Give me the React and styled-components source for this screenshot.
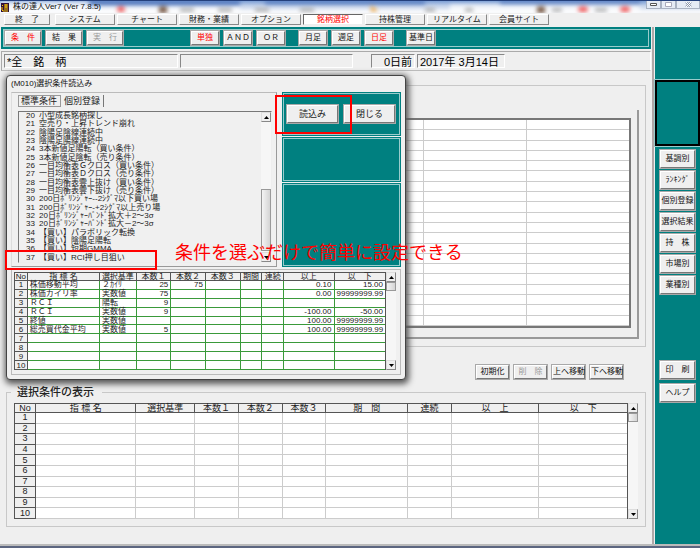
import styled, { createGlobalStyle, css } from "styled-components";

const GlobalStyle = createGlobalStyle`
  * {
    box-sizing: border-box;
  }
  body {
    margin: 0;
    background: #efefef;
    color: #222;
    font: 8px/8px "Liberation Sans", "Noto Sans CJK JP", sans-serif;
  }
  button, input {
    font: inherit;
    color: inherit;
    white-space: nowrap;
  }
`;

const raised = css`
  border: 1px solid;
  border-color: #fff #777 #777 #fff;
  box-shadow: 0 0 0 1px #a9a9a9;
`;

const Page = styled.div`
  display: flex;
  flex-direction: column;
  min-height: 100vh;
  border-bottom: 2px solid #5c6680;
`;

const TitleBar = styled.header`
  position: relative;
  display: flex;
  align-items: center;
  gap: 4px;
  height: 13px;
  padding-left: 1px;
  overflow: hidden;
  border-top: 1px solid #24407c;
  background: linear-gradient(#7d9fd6, #c3d2ea 40%, #f4f6fa 85%);
`;

const Backdrop = styled.svg`
  position: absolute;
  inset: 0;
  width: 100%;
  height: 100%;
  filter: blur(2px);
`;

const Title = styled.h1`
  position: relative;
  flex: 1;
  margin: 0;
  font-size: 8px;
  font-weight: 400;
  color: #111;
`;

const AppIcon = styled.svg`
  position: relative;
  width: 8px;
  height: 9px;
`;

const WindowButtons = styled.div`
  position: relative;
  align-self: flex-start;
  display: flex;
  height: 8px;
`;

const WindowButton = styled.button`
  display: grid;
  place-items: center;
  width: ${(p) => (p.$wide ? 24 : 15)}px;
  padding: 0;
  border: 1px solid #a9b2c2;
  border-top: 0;
  background: #e5ebf5;
`;

const Menu = styled.nav`
  display: flex;
  gap: 2px;
  height: 14px;
  padding: 1px 4px 2px;
`;

const MenuButton = styled.button`
  width: 60px;
  padding: 0;
  border: 1px solid;
  border-color: ${(p) => (p.$active ? "#666 #eee #eee #666" : "#fff #888 #888 #fff")};
  background: ${(p) => (p.$active ? "#fff" : "#efefef")};
  color: ${(p) => (p.$active ? "#f00" : "#222")};

  &:first-child {
    width: 46px;
    margin-right: 3px;
  }
`;

const Main = styled.div`
  flex: 1;
  display: flex;
  border-bottom: 2px solid #bbb;
`;

const Content = styled.main`
  flex: 1;
  min-width: 0;
  border-right: 2px solid #b0a8a8;
`;

const Toolbar = styled.div`
  display: flex;
  gap: 14px;
  height: 22px;
  margin: 0 1px;
  padding: 3px 3px;
  border: 1px solid #008080;
  outline: 1px solid #9cc;
  outline-offset: -3px;
  background: #008080;
`;

const ToolGroup = styled.div`
  display: flex;
  gap: 5px;
  margin-right: ${(p) => (p.$spaced ? 54 : 0)}px;
`;

const ToolButton = styled.button`
  ${raised}
  width: ${(p) => (p.$wide ? 36 : 28)}px;
  height: 14px;
  padding: 0;
  background: #efefef;
  color: ${(p) => (p.$on ? "#f00" : "#111")};

  &:disabled {
    color: #999;
  }
`;

const StatusBar = styled.div`
  display: flex;
  align-items: center;
  gap: 2px;
  height: 20px;
  margin: 2px 1px 0;
  padding: 0 2px;
  border: 1px solid;
  border-color: #aaa #fff #bbb #aaa;
`;

const StatusField = styled.input`
  width: ${(p) => p.$width}px;
  height: 14px;
  margin-right: ${(p) => (p.$last ? 16 : 0)}px;
  padding: 0 2px;
  border: 1px solid;
  border-color: #888 #fff #fff #888;
  background: #efefef;
  font-size: 11px;
  color: #000;
  text-align: ${(p) => p.$align || "left"};
`;

const Body = styled.div`
  position: relative;
  padding: 14px 6px 16px;
`;

const Group = styled.section`
  padding: ${(p) => (p.$deep ? "24px 6px 7px 4px" : "10px 7px 7px")};
  border: 1px solid #c8c8c8;
`;

const GroupTitle = styled.h2`
  width: fit-content;
  margin: -16px 0 5px -3px;
  padding: 0 8px 0 6px;
  background: #efefef;
  font-size: 11px;
  line-height: 11px;
  font-weight: 500;
`;

const Sheet = styled.div`
  padding: 8px 6px 9px 2px;
  border: solid #999;
  border-width: 0 2px 2px 0;
`;

const TableFrame = styled.div`
  display: flex;
`;

const Table = styled.table`
  flex: 1;
  width: 100%;
  min-width: 0;
  height: ${(p) => p.$height}px;
  table-layout: fixed;
  border-collapse: separate;
  border-spacing: 0;
  border: solid ${(p) => (p.$thick ? "#777" : "#555")};
  border-width: ${(p) => (p.$thick ? "2px" : "1px 1px 0 1px")};
  background: #fff;
  font-size: ${(p) => p.$font || 8}px;

  th, td {
    height: 8px;
    padding: 0 2px;
    font-weight: 400;
    line-height: 7px;
    white-space: nowrap;
    border: 0 solid ${(p) => p.$line};
    border-width: 0 1px 1px 0;
  }
  th {
    padding: 0;
    border-color: #555;
    background: #efefef;
  }
  thead th {
    height: ${(p) => p.$head || 8}px;
  }
  tr > :last-child {
    border-right: 0;
  }
`;

const Cell = styled.td`
  text-align: ${(p) => (p.$number ? "right" : "left")};
`;

const ScrollTrack = styled.div`
  display: flex;
  flex-direction: column;
  width: 10px;
  background: #f6f6f6;
`;

const ScrollArrow = styled.button`
  display: grid;
  place-items: center;
  height: 10px;
  padding: 0;
  border: 1px solid;
  border-color: #ddd #888 #888 #ddd;
  background: #efefef;
`;

const ScrollThumb = styled.div`
  height: ${(p) => p.$size}px;
  margin-top: ${(p) => p.$offset || 0}px;
  border: 1px solid #999;
  background: linear-gradient(90deg, #f4f4f4, #d4d4d4);
`;

const ScrollGap = styled.div`
  flex: 1;
`;

const Actions = styled.div`
  display: flex;
  justify-content: flex-end;
  gap: 5px;
  padding: 18px 23px 13px 0;
`;

const ActionButton = styled(ToolButton)`
  width: 33px;
`;

const Sidebar = styled.aside`
  display: flex;
  flex-direction: column;
  width: 45px;
  margin-left: 1px;
  background: #008080;
`;

const Monitor = styled.div`
  height: 66px;
  margin-top: 53px;
  border: 2px solid #000;
  outline: 1px solid #9cc;
`;

const SideGroup = styled.div`
  display: flex;
  flex-direction: column;
  gap: ${(p) => p.$gap}px;
  padding: 4px 5px;
  margin-top: ${(p) => p.$top || 0}px;
`;

const SideButton = styled.button`
  ${raised}
  height: 18px;
  padding: 0;
  background: #efefef;
  color: #111;
`;

const Dialog = styled.section`
  position: absolute;
  top: 4px;
  left: 6px;
  width: 400px;
  padding: 4px;
  border: 1px solid #444;
  border-radius: 4px;
  background: #f0f0f0;
  box-shadow: 1px 2px 6px 2px #555;
`;

const DialogTitle = styled.h2`
  margin: 0 -4px;
  padding: 0 4px;
  height: 12px;
  font-size: 8px;
  line-height: 8px;
  font-weight: 400;
  color: #111;
`;

const DialogTop = styled.div`
  display: flex;
  gap: 5px;
  height: 175px;
`;

const Picker = styled.div`
  flex: 1;
  display: flex;
  flex-direction: column;
  padding: 2px 4px 3px 6px;
  border: 1px solid;
  border-color: #bbb #999 #999 #ddd;
`;

const Tabs = styled.div`
  display: flex;
  height: 12px;
`;

const Tab = styled.button`
  padding: 0 3px;
  border: 0 solid #777;
  border-right-width: 1px;
  background: transparent;
  font-size: 9px;
  outline: ${(p) => (p.$active ? "1px solid #999" : "0")};
  outline-offset: -1px;
`;

const ListBox = styled.div`
  flex: 1;
  display: flex;
  margin-top: 4px;
  border: 1px solid;
  border-color: #777 #eee #eee #777;
`;

const Items = styled.ol`
  flex: 1;
  display: grid;
  grid-auto-rows: 1fr;
  margin: 0;
  padding: 0 0 0 7px;
  list-style: none;
`;

const Item = styled.li`
  display: grid;
  grid-template-columns: 13px 1fr;
  align-items: center;
  white-space: pre;
`;

const Commands = styled.div`
  display: flex;
  flex-direction: column;
  gap: 1px;
  width: 119px;
`;

const CommandPanel = styled.div`
  flex: ${(p) => p.$grow};
  display: flex;
  align-items: center;
  gap: 6px;
  padding: 0 4px;
  border: 1px solid #008080;
  outline: 1px solid #9cc;
  outline-offset: -2px;
  background: #008080;
`;

const CommandButton = styled.button`
  ${raised}
  width: 51px;
  height: 18px;
  padding: 0;
  background: #efefef;
  font-size: 9px;
`;

const DialogTable = styled.div`
  margin-top: 2px;
  padding: 2px 4px 4px 2px;
  border: 1px solid #bbb;
`;

const Highlight = styled.div`
  position: absolute;
  top: ${(p) => p.$top}px;
  left: ${(p) => p.$left}px;
  width: ${(p) => p.$width}px;
  height: ${(p) => p.$height}px;
  border: 2px solid #f00;
  pointer-events: none;
`;

const Callout = styled.p`
  position: absolute;
  top: 167px;
  left: 168px;
  margin: 0;
  font-size: 18px;
  line-height: 20px;
  color: #f00;
  white-space: nowrap;
`;

const menuItems = [
  "終　了",
  "システム",
  "チャート",
  "財務・業績",
  "オプション",
  "銘柄選択",
  "持株管理",
  "リアルタイム",
  "会員サイト",
];

const conditions = [
  [20, "小型成長銘柄探し"],
  [21, "空売り・上昇トレンド崩れ"],
  [22, "陰陽足陰線連続中"],
  [23, "陰陽足陽線連続中"],
  [24, "3本新値足陽転（買い条件）"],
  [25, "3本新値足陰転（売り条件）"],
  [26, "一目均衡表Ｇクロス（買い条件）"],
  [27, "一目均衡表Ｄクロス（売り条件）"],
  [28, "一目均衡表雲上抜け（買い条件）"],
  [29, "一目均衡表雲下抜け（売り条件）"],
  [30, "200日ﾎﾞﾘﾝｼﾞｬｰ--2ｼｸﾞﾏ以下買い場"],
  [31, "200日ﾎﾞﾘﾝｼﾞｬｰ-+2ｼｸﾞﾏ以上売り場"],
  [32, "20日ﾎﾞﾘﾝｼﾞｬｰﾊﾞﾝﾄﾞ拡大＋2～3σ"],
  [33, "20日ﾎﾞﾘﾝｼﾞｬｰﾊﾞﾝﾄﾞ拡大－2～3σ"],
  [34, "【買い】パラボリック転換"],
  [35, "【買い】陰陽足陽転"],
  [36, "【買い】短期GMMA"],
  [37, "【買い】RCI押し目狙い"],
];

const indicators = [
  ["株価移動平均", "２ｶｲﾘ", "25", "75", "", "", "", "0.10", "15.00"],
  ["株価カイリ率", "実数値", "75", "", "", "", "", "0.00", "99999999.99"],
  ["ＲＣＩ", "陽転", "9", "", "", "", "", "", ""],
  ["ＲＣＩ", "実数値", "9", "", "", "", "", "-100.00", "-50.00"],
  ["終値", "実数値", "", "", "", "", "", "100.00", "99999999.99"],
  ["総売買代金平均", "実数値", "5", "", "", "", "", "100.00", "99999999.99"],
];

const headings = ["No", "指 標 名", "選択基準", "本数１", "本数２", "本数３"];
const dialogHeadings = [...headings, "期間", "連続", "以上", "以　下"];
const resultHeadings = [...headings, "期　間", "連続", "以　上", "以　下"];
const dialogWidths = [13, 73, 37, 35, 35, 35, 22, 22, 51, 51];
const resultWidths = [21, 101, 59, 44, 44, 44, 82, 44, 88, 88];

const sideItems = ["基調別", "ﾗﾝｷﾝｸﾞ", "個別登録", "選択結果", "持　株", "市場別", "業種別"];

const Arrow = ({ down }) => (
  <svg width="5" height="3" viewBox="0 0 5 3" aria-hidden="true">
    <path d={down ? "M0 0h5L2.5 3z" : "M0 3h5L2.5 0z"} fill="#000" />
  </svg>
);

const Scrollbar = ({ size, offset }) => (
  <ScrollTrack>
    <ScrollArrow aria-label="上へ">
      <Arrow />
    </ScrollArrow>
    <ScrollThumb $size={size} $offset={offset} />
    <ScrollGap />
    <ScrollArrow aria-label="下へ">
      <Arrow down />
    </ScrollArrow>
  </ScrollTrack>
);

const ConditionTable = ({ columns, widths, rows = [], ...rest }) => {
  const total = widths.reduce((sum, width) => sum + width, 0);

  return (
    <TableFrame>
      <Table {...rest}>
        <colgroup>
          {widths.map((width, index) => (
            <col key={index} style={{ width: `${(width / total) * 100}%` }} />
          ))}
        </colgroup>
        <thead>
          <tr>
            {columns.map((column) => (
              <th key={column}>{column}</th>
            ))}
          </tr>
        </thead>
        <tbody>
          {Array.from({ length: 10 }, (_, row) => (
            <tr key={row}>
              <th>{row + 1}</th>
              {columns.slice(1).map((column, index) => (
                <Cell key={column} $number={index > 1}>
                  {rows[row]?.[index]}
                </Cell>
              ))}
            </tr>
          ))}
        </tbody>
      </Table>
      <Scrollbar size={9} />
    </TableFrame>
  );
};

const LoadDialog = () => (
  <Dialog role="dialog" aria-labelledby="dialog-title">
    <DialogTitle id="dialog-title">(M010)選択条件読込み</DialogTitle>
    <DialogTop>
      <Picker>
        <Tabs>
          <Tab $active>標準条件</Tab>
          <Tab>個別登録</Tab>
        </Tabs>
        <ListBox>
          <Items>
            {conditions.map(([number, name]) => (
              <Item key={number}>
                <span>{number}</span>
                <span>{name}</span>
              </Item>
            ))}
          </Items>
          <Scrollbar size={62} offset={67} />
        </ListBox>
      </Picker>
      <Commands>
        <CommandPanel $grow={44}>
          <CommandButton>読込み</CommandButton>
          <CommandButton>閉じる</CommandButton>
        </CommandPanel>
        <CommandPanel $grow={44} />
        <CommandPanel $grow={85} />
      </Commands>
    </DialogTop>
    <DialogTable>
      <ConditionTable
        columns={dialogHeadings}
        widths={dialogWidths}
        rows={indicators}
        $height={98}
        $line="#3a9a3a"
      />
    </DialogTable>
    <Highlight $top={19} $left={268} $width={77} $height={39} />
    <Highlight $top={174} $left={-2} $width={152} $height={20} />
    <Callout>条件を選ぶだけで簡単に設定できる</Callout>
  </Dialog>
);

const App = () => (
  <Page>
    <GlobalStyle />
    <TitleBar>
      <Backdrop viewBox="0 0 700 13" preserveAspectRatio="none" aria-hidden="true">
        <path d="M90 0h150v4H90zM265 0h160v3H265zM500 0h140v3H500z" fill="#3f68b4" />
        <path d="M0 6h240v7H0zM450 4h190v9H450z" fill="#fff" opacity="0.7" />
        <path d="M0 0h88v9H0z" fill="#fff" opacity="0.6" />
        <g fill="#e55">
          <ellipse cx="121" cy="9" rx="4" ry="3" />
          <ellipse cx="583" cy="9" rx="5" ry="3" />
          <ellipse cx="625" cy="9" rx="5" ry="3" />
        </g>
        <path d="M159 6h8v7h-8zM537 6h8v7h-8z" fill="#7a5c48" />
        <path d="M370 5l8 5-6 2z" fill="#f0a030" />
        <path d="M180 8h14v3h-14zM218 8h14v3h-14zM255 8h14v3h-14zM300 8h14v3h-14zM425 8h10v3h-10zM465 8h8v3h-8zM552 8h10v3h-10zM595 8h12v3h-12z" fill="#999" />
      </Backdrop>
      <AppIcon viewBox="0 0 8 9" aria-hidden="true">
        <path d="M0 0h8v9H0z" fill="#30103c" />
        <path d="M1 2l1 1M3 2h4M5 1v4M3 4h4M1 4v3l1 1h5M3 6h4" stroke="#fc0" fill="none" />
      </AppIcon>
      <Title>株の達人Ver7 (Ver 7.8.5)</Title>
      <WindowButtons>
        <WindowButton aria-label="最小化">
          <svg width="7" height="3"><path d="M.5.5h6v2h-6z" fill="#fff" stroke="#555" /></svg>
        </WindowButton>
        <WindowButton aria-label="最大化">
          <svg width="7" height="5"><path d="M.5.5h6v4h-6z" fill="#fff" stroke="#aab" /></svg>
        </WindowButton>
        <WindowButton $wide aria-label="閉じる">
          <svg width="7" height="5">
            <path d="M1 0l5 5M6 0L1 5" stroke="#8a94a8" strokeWidth="2" />
            <path d="M1 0l5 5M6 0L1 5" stroke="#fff" />
          </svg>
        </WindowButton>
      </WindowButtons>
    </TitleBar>
    <Menu>
      {menuItems.map((item) => (
        <MenuButton key={item} $active={item === "銘柄選択"}>
          {item}
        </MenuButton>
      ))}
    </Menu>
    <Main>
      <Content>
        <Toolbar>
          <ToolGroup $spaced>
            <ToolButton $wide $on>条　件</ToolButton>
            <ToolButton $wide>結　果</ToolButton>
            <ToolButton $wide disabled>実　行</ToolButton>
          </ToolGroup>
          <ToolGroup>
            <ToolButton $on>単独</ToolButton>
            <ToolButton>ＡＮＤ</ToolButton>
            <ToolButton>ＯＲ</ToolButton>
          </ToolGroup>
          <ToolGroup>
            <ToolButton>月足</ToolButton>
            <ToolButton>週足</ToolButton>
            <ToolButton $on>日足</ToolButton>
          </ToolGroup>
          <ToolButton>基準日</ToolButton>
        </Toolbar>
        <StatusBar>
          <StatusField $width={174} aria-label="銘柄" readOnly value="*全　銘　柄" />
          <StatusField $width={173} $last aria-label="条件" readOnly value="" />
          <StatusField $width={44} $align="right" aria-label="日前" readOnly value="0日前" />
          <StatusField $width={88} aria-label="基準日" readOnly value="2017年 3月14日" />
        </StatusBar>
        <Body>
          <Group $deep>
            <Sheet>
              <Table $height={210} $thick $line="#ccc">
                <tbody>
                  {Array.from({ length: 20 }, (_, row) => (
                    <tr key={row}>
                      {Array.from({ length: 6 }, (_, column) => (
                        <Cell key={column} />
                      ))}
                    </tr>
                  ))}
                </tbody>
              </Table>
            </Sheet>
          </Group>
          <Actions>
            <ActionButton>初期化</ActionButton>
            <ActionButton disabled>削　除</ActionButton>
            <ActionButton>上へ移動</ActionButton>
            <ActionButton>下へ移動</ActionButton>
          </Actions>
          <Group>
            <GroupTitle>選択条件の表示</GroupTitle>
            <ConditionTable
              columns={resultHeadings}
              widths={resultWidths}
              $height={116}
              $head={9}
              $font={9}
              $line="#ccc"
            />
          </Group>
          <LoadDialog />
        </Body>
      </Content>
      <Sidebar>
        <Monitor />
        <SideGroup $gap={3}>
          {sideItems.map((item) => (
            <SideButton key={item}>{item}</SideButton>
          ))}
        </SideGroup>
        <SideGroup $gap={5} $top={59}>
          <SideButton>印　刷</SideButton>
          <SideButton>ヘルプ</SideButton>
        </SideGroup>
      </Sidebar>
    </Main>
  </Page>
);

export default App;
